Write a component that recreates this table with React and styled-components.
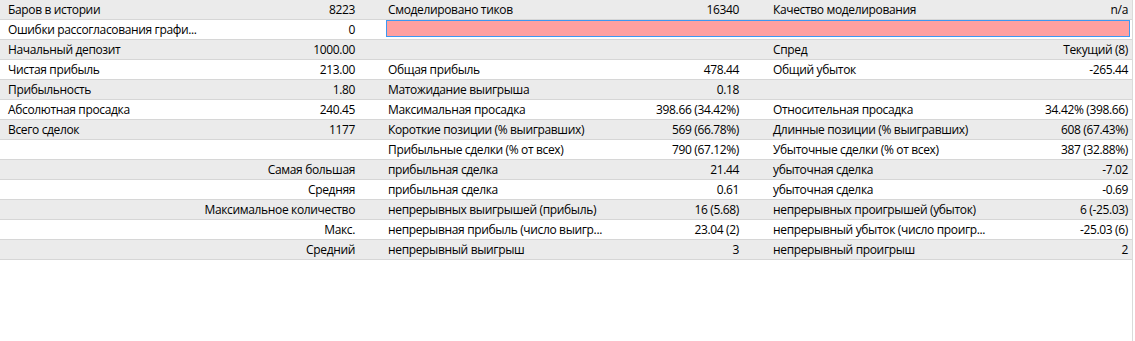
import styled, { createGlobalStyle } from "styled-components";

const GlobalStyle = createGlobalStyle`
  html, body {
    margin: 0;
    padding: 0;
    background: #ffffff;
  }
`;

const Page = styled.div`
  width: 1132px;
  height: 341px;
  border-right: 1px solid #dadada;
  background: #ffffff;
  font-family: "Open Sans", "Noto Sans", sans-serif;
  font-size: 12px;
  letter-spacing: -0.35px;
  color: #000000;
`;

const Row = styled.div`
  display: grid;
  grid-template-columns: 382px 384px 1fr;
  height: 20px;
  box-sizing: border-box;
  border-bottom: 1px solid #d6d6d6;
  background: ${(p) => (p.$shaded ? "#ebebeb" : "#ffffff")};
`;

const Group = styled.div`
  display: flex;
  align-items: center;
  justify-content: space-between;
  padding: ${(p) => p.$pad};
  line-height: 19px;
  white-space: nowrap;
  overflow: hidden;
`;

const Label = styled.span`
  flex: ${(p) => (p.$right ? "1" : "none")};
  text-align: ${(p) => (p.$right ? "right" : "left")};
`;

const Value = styled.span`
  text-align: right;
`;

const ProgressBar = styled.div`
  grid-column: 2 / 4;
  align-self: start;
  height: 17px;
  margin: 0 2px 0 4px;
  box-sizing: border-box;
  border: 1px solid #3d98f2;
  background: #ffa0a0;
`;

const pads = ["0 27px 0 8px", "0 27px 0 6px", "0 4px 0 7px"];

const rows = [
  [["Баров в истории", "8223"], ["Смоделировано тиков", "16340"], ["Качество моделирования", "n/a"]],
  "bar",
  [["Начальный депозит", "1000.00"], ["", ""], ["Спред", "Текущий (8)"]],
  [["Чистая прибыль", "213.00"], ["Общая прибыль", "478.44"], ["Общий убыток", "-265.44"]],
  [["Прибыльность", "1.80"], ["Матожидание выигрыша", "0.18"], ["", ""]],
  [["Абсолютная просадка", "240.45"], ["Максимальная просадка", "398.66 (34.42%)"], ["Относительная просадка", "34.42% (398.66)"]],
  [["Всего сделок", "1177"], ["Короткие позиции (% выигравших)", "569 (66.78%)"], ["Длинные позиции (% выигравших)", "608 (67.43%)"]],
  [["", ""], ["Прибыльные сделки (% от всех)", "790 (67.12%)"], ["Убыточные сделки (% от всех)", "387 (32.88%)"]],
  [["Самая большая", null], ["прибыльная сделка", "21.44"], ["убыточная сделка", "-7.02"]],
  [["Средняя", null], ["прибыльная сделка", "0.61"], ["убыточная сделка", "-0.69"]],
  [["Максимальное количество", null], ["непрерывных выигрышей (прибыль)", "16 (5.68)"], ["непрерывных проигрышей (убыток)", "6 (-25.03)"]],
  [["Макс.", null], ["непрерывная прибыль (число выигр...", "23.04 (2)"], ["непрерывный убыток (число проигр...", "-25.03 (6)"]],
  [["Средний", null], ["непрерывный выигрыш", "3"], ["непрерывный проигрыш", "2"]],
];

export default function App() {
  return (
    <>
      <GlobalStyle />
      <Page>
        {rows.map((row, i) => {
          if (row === "bar") {
            return (
              <Row key={i} $shaded={i % 2 === 0}>
                <Group $pad={pads[0]}>
                  <Label>Ошибки рассогласования графи...</Label>
                  <Value>0</Value>
                </Group>
                <ProgressBar />
              </Row>
            );
          }
          return (
            <Row key={i} $shaded={i % 2 === 0}>
              {row.map(([label, value], j) => (
                <Group key={j} $pad={pads[j]}>
                  <Label $right={value === null}>{label}</Label>
                  {value !== null && <Value>{value}</Value>}
                </Group>
              ))}
            </Row>
          );
        })}
      </Page>
    </>
  );
}
